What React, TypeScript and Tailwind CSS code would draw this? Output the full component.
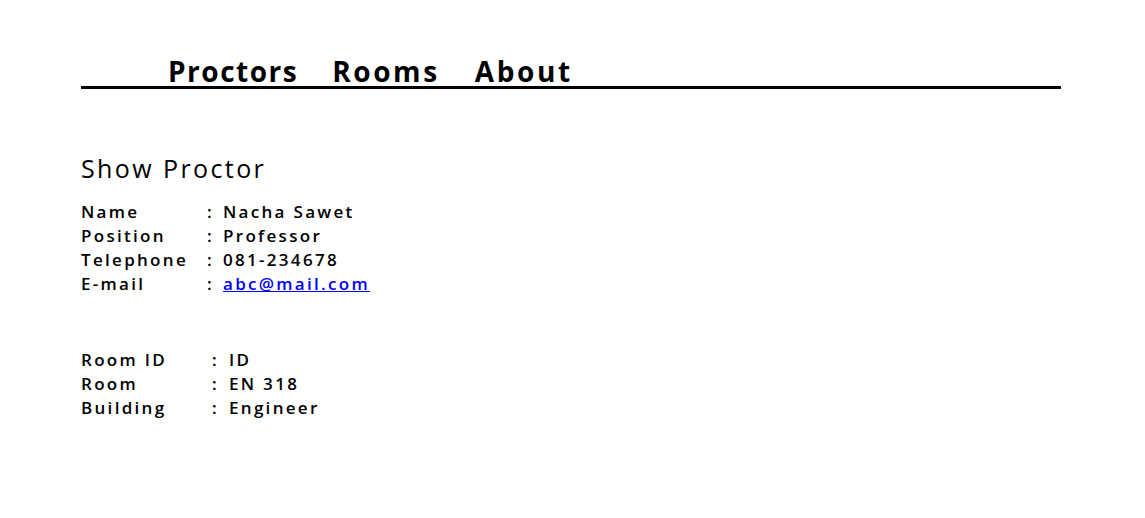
const proctor = [
  ['Name', 'Nacha Sawet'],
  ['Position', 'Professor'],
  ['Telephone', '081-234678'],
  ['E-mail', 'abc@mail.com'],
];

const room = [
  ['Room ID', 'ID'],
  ['Room', 'EN 318'],
  ['Building', 'Engineer'],
];

export default function App() {
  return (
    <div className="min-h-screen bg-white text-black font-['Open_Sans',sans-serif] pl-[81px] pt-[56px]">
      {/* Nav */}
      <nav className="w-[980px] border-b-[3px] border-black pl-[87px] flex text-[28px] font-bold leading-[30px]">
        <a href="#" className="tracking-[1.5px]">Proctors</a>
        <a href="#" className="ml-[34px] tracking-[2.6px]">Rooms</a>
        <a href="#" className="ml-[35px] tracking-[2.6px]">About</a>
      </nav>

      <h1 className="mt-[64px] text-[25px] leading-[30px] tracking-[2.4px]">Show Proctor</h1>

      {/* Proctor detail */}
      <div className="mt-[17px] text-[17px] font-semibold leading-[24px] tracking-[2.3px]">
        {proctor.map(([k, v]) => (
          <div key={k} className="flex">
            <span className="w-[126px]">{k}</span>
            <span className="w-[16px]">:</span>
            {k === 'E-mail' ? (
              <a href="#" className="text-[#0000ff] underline">{v}</a>
            ) : (
              <span>{v}</span>
            )}
          </div>
        ))}
      </div>

      {/* Room detail */}
      <div className="mt-[52px] text-[17px] font-semibold leading-[24px] tracking-[2.3px]">
        {room.map(([k, v]) => (
          <div key={k} className="flex">
            <span className="w-[131px]">{k}</span>
            <span className="w-[17px]">:</span>
            <span>{v}</span>
          </div>
        ))}
      </div>
    </div>
  );
}
